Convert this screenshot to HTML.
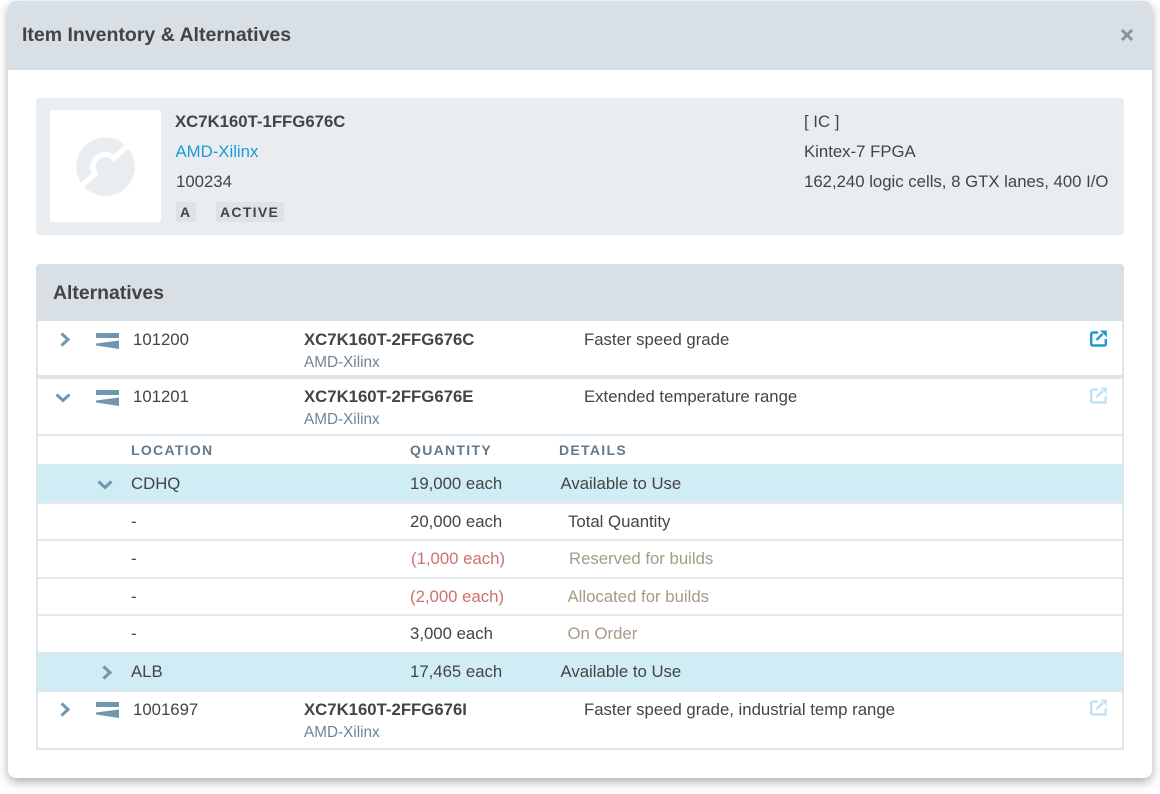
<!DOCTYPE html>
<html><head><meta charset="utf-8"><style>
html,body{margin:0;padding:0;background:#fff;width:1160px;height:794px;overflow:hidden}
body{position:relative;font-family:"Liberation Sans",sans-serif;color:#444;font-size:16.75px}
.a{position:absolute}
.t{position:absolute;line-height:20px;white-space:nowrap}
.b{font-weight:bold}
.m{color:#6f8594;font-size:15.3px}
.h{position:absolute;line-height:16px;font-size:14px;font-weight:bold;letter-spacing:1.3px;color:#627a8b;white-space:nowrap}
.l{position:absolute;left:38px;width:1084px;height:2px;background:#e4e9ee}
.r{color:#cf7070}.g{color:#a69b85}
svg{position:absolute;overflow:visible}
</style></head><body>
<div class="a" style="left:8px;top:1px;width:1144px;height:777px;background:#fff;border-radius:8px;box-shadow:0 4px 10px rgba(0,0,0,.32)"></div>
<div class="a" style="left:8px;top:1px;width:1144px;height:69px;background:#d8dfe5;border-radius:8px 8px 0 0"></div>
<div class="t b" style="left:22px;top:25px;font-size:19.5px;color:#444">Item Inventory &amp; Alternatives</div>
<svg style="left:1121px;top:29px" width="12" height="12"><path d="M1 1L11 11M11 1L1 11" stroke="#8b9298" stroke-width="3" fill="none"/></svg>

<div class="a" style="left:36px;top:98px;width:1088px;height:137px;background:#e9edf0;border-radius:4px"></div>
<div class="a" style="left:50px;top:110px;width:111px;height:112px;background:#fff;border-radius:2px"></div>
<svg style="left:76px;top:137px" width="60" height="60" viewBox="0 0 60 60"><circle cx="29.500" cy="29.700" r="29.300" fill="#e9edf0"/><path d="M2 52L19 37A12.500 12.500 0 0 1 38 21L57 4" stroke="#fff" stroke-width="5.500" fill="none"/></svg>
<div class="t b" style="left:175px;top:111.500px">XC7K160T-1FFG676C</div>
<div class="t" style="left:175.500px;top:142px;color:#1e9ad6">AMD-Xilinx</div>
<div class="t" style="left:176px;top:172px">100234</div>
<div class="a" style="left:176px;top:202px;width:20px;height:20px;background:#dde3e8;border-radius:2px"></div>
<div class="a" style="left:216px;top:202px;width:68px;height:20px;background:#dde3e8;border-radius:2px"></div>
<div class="t b" style="left:180px;top:202px;font-size:14px;letter-spacing:1px">A</div>
<div class="t b" style="left:220px;top:202px;font-size:14px;letter-spacing:1.300px">ACTIVE</div>
<div class="t" style="left:804px;top:112px">[ IC ]</div>
<div class="t" style="left:804px;top:142px">Kintex-7 FPGA</div>
<div class="t" style="left:804px;top:172px">162,240 logic cells, 8 GTX lanes, 400 I/O</div>

<div class="a" style="left:36px;top:264px;width:1088px;height:57px;background:#d8dfe5;border-radius:4px 4px 0 0"></div>
<div class="t b" style="left:53px;top:283px;font-size:19.400px">Alternatives</div>
<div class="a" style="left:36px;top:321px;width:2px;height:429px;background:#dde4ea"></div>
<div class="a" style="left:1122px;top:321px;width:2px;height:429px;background:#dde4ea"></div>
<div class="a" style="left:36px;top:748px;width:1088px;height:2px;background:#dde4ea"></div>
<div class="a" style="left:38px;top:375px;width:1084px;height:4px;background:#dde4ea"></div>

<div class="a" style="left:38px;top:465px;width:1084px;height:37px;background:#d0edf6"></div>
<div class="a" style="left:38px;top:653.500px;width:1084px;height:37px;background:#d0edf6"></div>
<div class="l" style="top:434px"></div>
<div class="l" style="top:464px;height:1px"></div>
<div class="l" style="top:501.500px"></div>
<div class="l" style="top:539px"></div>
<div class="l" style="top:576.500px"></div>
<div class="l" style="top:614px"></div>
<div class="l" style="top:652px"></div>
<div class="l" style="top:690px"></div>

<svg style="left:59.500px;top:332px" width="10" height="15"><path d="M1.500 1.500L8 7.500L1.500 13.500" stroke="#6f97ad" stroke-width="3" fill="none"/></svg>
<svg style="left:96px;top:332.500px" width="23" height="16"><path d="M0 0H23V5H0ZM0 10.500L23 7.500V16L0 12.500Z" fill="#6f97ad"/></svg>
<div class="t" style="left:133px;top:330px">101200</div>
<div class="t b" style="left:304px;top:330px">XC7K160T-2FFG676C</div>
<div class="t m" style="left:304px;top:353px">AMD-Xilinx</div>
<div class="t" style="left:584px;top:330px">Faster speed grade</div>
<svg style="left:1090px;top:329.500px" width="17" height="17" viewBox="0 0 17 17"><path d="M8 2.500H3Q1.200 2.500 1.200 4.300V13.700Q1.200 15.500 3 15.500H14Q15.800 15.500 15.800 13.700V9" stroke="#2298d6" stroke-width="2.400" fill="none"/><path d="M6.500 10L12.500 4" stroke="#2298d6" stroke-width="2.400" fill="none"/><path d="M10 0.500H16.800V7.300Z" fill="#2298d6"/></svg>

<svg style="left:55px;top:393px" width="16" height="10"><path d="M1.500 1.500L8 7.500L14.500 1.500" stroke="#6f97ad" stroke-width="3" fill="none"/></svg>
<svg style="left:96px;top:389.500px" width="23" height="16"><path d="M0 0H23V5H0ZM0 10.500L23 7.500V16L0 12.500Z" fill="#6f97ad"/></svg>
<div class="t" style="left:133px;top:387px">101201</div>
<div class="t b" style="left:304px;top:387px">XC7K160T-2FFG676E</div>
<div class="t m" style="left:304px;top:410px">AMD-Xilinx</div>
<div class="t" style="left:584px;top:387px">Extended temperature range</div>
<svg style="left:1090px;top:386.500px;opacity:.28" width="17" height="17" viewBox="0 0 17 17"><path d="M8 2.500H3Q1.200 2.500 1.200 4.300V13.700Q1.200 15.500 3 15.500H14Q15.800 15.500 15.800 13.700V9" stroke="#2298d6" stroke-width="2.400" fill="none"/><path d="M6.500 10L12.500 4" stroke="#2298d6" stroke-width="2.400" fill="none"/><path d="M10 0.500H16.800V7.300Z" fill="#2298d6"/></svg>

<div class="h" style="left:131px;top:442px">LOCATION</div>
<div class="h" style="left:410px;top:442px">QUANTITY</div>
<div class="h" style="left:559px;top:442px">DETAILS</div>

<svg style="left:97px;top:480px" width="16" height="10"><path d="M1.500 1.500L8 7.500L14.500 1.500" stroke="#6f97ad" stroke-width="3" fill="none"/></svg>
<div class="t" style="left:131px;top:473.500px">CDHQ</div>
<div class="t" style="left:410px;top:473.500px">19,000 each</div>
<div class="t" style="left:560.500px;top:473.500px">Available to Use</div>

<div class="t" style="left:131px;top:511.500px">-</div>
<div class="t" style="left:410px;top:511.500px">20,000 each</div>
<div class="t" style="left:568px;top:511.500px">Total Quantity</div>

<div class="t" style="left:131px;top:549px">-</div>
<div class="t r" style="left:411px;top:549px">(1,000 each)</div>
<div class="t g" style="left:569px;top:549px">Reserved for builds</div>

<div class="t" style="left:131px;top:587px">-</div>
<div class="t r" style="left:410px;top:587px">(2,000 each)</div>
<div class="t g" style="left:567.500px;top:587px">Allocated for builds</div>

<div class="t" style="left:131px;top:624px">-</div>
<div class="t" style="left:410px;top:624px">3,000 each</div>
<div class="t g" style="left:567.500px;top:624px">On Order</div>

<svg style="left:101.500px;top:664.500px" width="10" height="15"><path d="M1.500 1.500L8 7.500L1.500 13.500" stroke="#6f97ad" stroke-width="3" fill="none"/></svg>
<div class="t" style="left:131px;top:662px">ALB</div>
<div class="t" style="left:410px;top:662px">17,465 each</div>
<div class="t" style="left:560.500px;top:662px">Available to Use</div>

<svg style="left:59.500px;top:702px" width="10" height="15"><path d="M1.500 1.500L8 7.500L1.500 13.500" stroke="#6f97ad" stroke-width="3" fill="none"/></svg>
<svg style="left:96px;top:702px" width="23" height="16"><path d="M0 0H23V5H0ZM0 10.500L23 7.500V16L0 12.500Z" fill="#6f97ad"/></svg>
<div class="t" style="left:133px;top:700px">1001697</div>
<div class="t b" style="left:304px;top:700px">XC7K160T-2FFG676I</div>
<div class="t m" style="left:304px;top:722.500px">AMD-Xilinx</div>
<div class="t" style="left:584px;top:700px">Faster speed grade, industrial temp range</div>
<svg style="left:1090px;top:699px;opacity:.28" width="17" height="17" viewBox="0 0 17 17"><path d="M8 2.500H3Q1.200 2.500 1.200 4.300V13.700Q1.200 15.500 3 15.500H14Q15.800 15.500 15.800 13.700V9" stroke="#2298d6" stroke-width="2.400" fill="none"/><path d="M6.500 10L12.500 4" stroke="#2298d6" stroke-width="2.400" fill="none"/><path d="M10 0.500H16.800V7.300Z" fill="#2298d6"/></svg>
</body></html>
